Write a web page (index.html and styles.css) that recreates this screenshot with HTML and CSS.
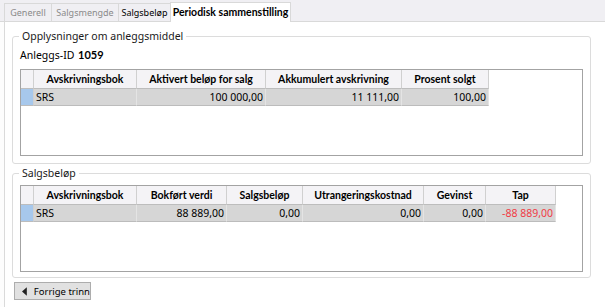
FILE: index.html
```html
<html>
  <head>
    <meta charset="utf-8" />
    <title>Periodisk sammenstilling</title>
    <link rel="stylesheet" href="styles.css">
  </head>
  <body>
    <div class="tabs">
      <div class="tab t1">Generell</div>
      <div class="tab t2">Salgsmengde</div>
      <div class="tab t3 dark">Salgsbeløp</div>
      <div class="tab t4 active">Periodisk sammenstilling</div>
    </div>

    <div class="page">
      <fieldset class="group">
        <legend>Opplysninger om anleggsmiddel</legend>
        <div class="id-row"><span class="id-label">Anleggs-ID</span><b>1059</b></div>
        <div class="grid">
          <div class="row head">
            <div class="cell rh"></div>
            <div class="cell w103">Avskrivningsbok</div>
            <div class="cell w129">Aktivert beløp for salg</div>
            <div class="cell w136">Akkumulert avskrivning</div>
            <div class="cell w87">Prosent solgt</div>
          </div>
          <div class="row data">
            <div class="cell rh sel"></div>
            <div class="cell w103 left">SRS</div>
            <div class="cell w129">100 000,00</div>
            <div class="cell w136">11 111,00</div>
            <div class="cell w87">100,00</div>
          </div>
        </div>
      </fieldset>

      <fieldset class="group second">
        <legend>Salgsbeløp</legend>
        <div class="grid">
          <div class="row head">
            <div class="cell rh"></div>
            <div class="cell w103">Avskrivningsbok</div>
            <div class="cell w90">Bokført verdi</div>
            <div class="cell w76">Salgsbeløp</div>
            <div class="cell w121">Utrangeringskostnad</div>
            <div class="cell w62">Gevinst</div>
            <div class="cell w70">Tap</div>
          </div>
          <div class="row data">
            <div class="cell rh sel"></div>
            <div class="cell w103 left">SRS</div>
            <div class="cell w90">88 889,00</div>
            <div class="cell w76">0,00</div>
            <div class="cell w121">0,00</div>
            <div class="cell w62">0,00</div>
            <div class="cell w70 neg">-88 889,00</div>
          </div>
        </div>
      </fieldset>

      <div class="btn">
        <svg width="5" height="9" viewBox="0 0 5 9"><polygon points="5,0 5,9 0,4.5" fill="#222"/></svg>
        <span>Forrige trinn</span>
      </div>
    </div>
  </body>
</html>
```

FILE: styles.css
```css
body {
    margin: 0;
    background: #fdfdfd;
    font-family: "Noto Sans", sans-serif;
    font-size: 10.5px;
    color: #000;
}
b {
    font-family: Lato, "Noto Sans", sans-serif;
    font-size: 11px;
}
.tabs {
    display: flex;
    align-items: flex-end;
    height: 22px;
    box-sizing: border-box;
    padding-left: 4px;
    background: #f0eff3;
    border-bottom: 1px solid #d9d9d9;
}
.tab {
    height: 18px;
    box-sizing: border-box;
    font-size: 9px;
    line-height: 17px;
    text-align: center;
    white-space: nowrap;
    border: 1px solid #d9d9d9;
    border-bottom: none;
    border-right: none;
    color: #8a8a8a;
    background: #f0eff3;
}
.t1 { width: 47px; }
.t2 { width: 67px; }
.t3 { width: 52px; }
.t4 { width: 121px; }
.tab.dark {
    color: #000;
}
.tab.active {
    height: 20px;
    line-height: 19px;
    margin-bottom: -1px;
    background: #fff;
    font-family: Lato, "Noto Sans", sans-serif;
    font-size: 10.5px;
    font-weight: bold;
    color: #000;
    border-right: 1px solid #d9d9d9;
}
.page {
    margin-left: 4px;
    height: 285px;
    box-sizing: border-box;
    padding: 7px 14px 0 7px;
    background: #fff;
    border-left: 1px solid #dadada;
}
.group {
    margin: 0;
    padding: 0 7px 7px 7px;
    border: 1px solid #dcdcdc;
    border-radius: 3px;
    min-width: 0;
}
.group legend {
    padding: 0 3px;
    margin-left: -1px;
    line-height: 15px;
    color: #1a1a1a;
}
.group.second {
    margin-top: 2px;
    padding-bottom: 5px;
}
.id-row {
    margin-top: 3px;
    line-height: 15px;
}
.id-label {
    display: inline-block;
    width: 58px;
}
.grid {
    margin-top: 6px;
    height: 87px;
    box-sizing: border-box;
    border: 1px solid #a3a3a3;
    background: #fff;
}
.second .grid {
    margin-top: 4px;
}
.row {
    display: flex;
}
.cell {
    box-sizing: border-box;
    border-right: 1px solid #d0d0d0;
    padding: 0 2px;
    text-align: right;
    white-space: nowrap;
    overflow: hidden;
}
.head .cell {
    height: 19px;
    line-height: 18px;
    text-align: center;
    font-family: Lato, "Noto Sans", sans-serif;
    font-size: 10.5px;
    font-weight: bold;
    background: #f4f3f6;
    border-bottom: 1px solid #bdbdbd;
}
.data .cell {
    height: 17px;
    line-height: 16px;
    background: #d6d6d6;
    border-bottom: 1px solid #bcbcbc;
    border-right-color: #e4e4e4;
}
.data .cell.left {
    text-align: left;
}
.data .cell.sel {
    background: #a7c8ec;
    border-right-color: #d0d0d0;
}
.data .cell.neg {
    color: #f03c46;
}
.rh { width: 13px; }
.w103 { width: 103px; }
.w129 { width: 129px; }
.w136 { width: 136px; }
.w87 { width: 87px; }
.w90 { width: 90px; }
.w76 { width: 76px; }
.w121 { width: 121px; }
.w62 { width: 62px; }
.w70 { width: 70px; }
.btn {
    display: flex;
    align-items: center;
    gap: 7px;
    width: 77px;
    height: 18px;
    box-sizing: border-box;
    margin: 4px 0 0 2px;
    padding-left: 7px;
    font-size: 9.5px;
    white-space: nowrap;
    background: #e1e1e1;
    border: 1px solid #adadad;
}
```
